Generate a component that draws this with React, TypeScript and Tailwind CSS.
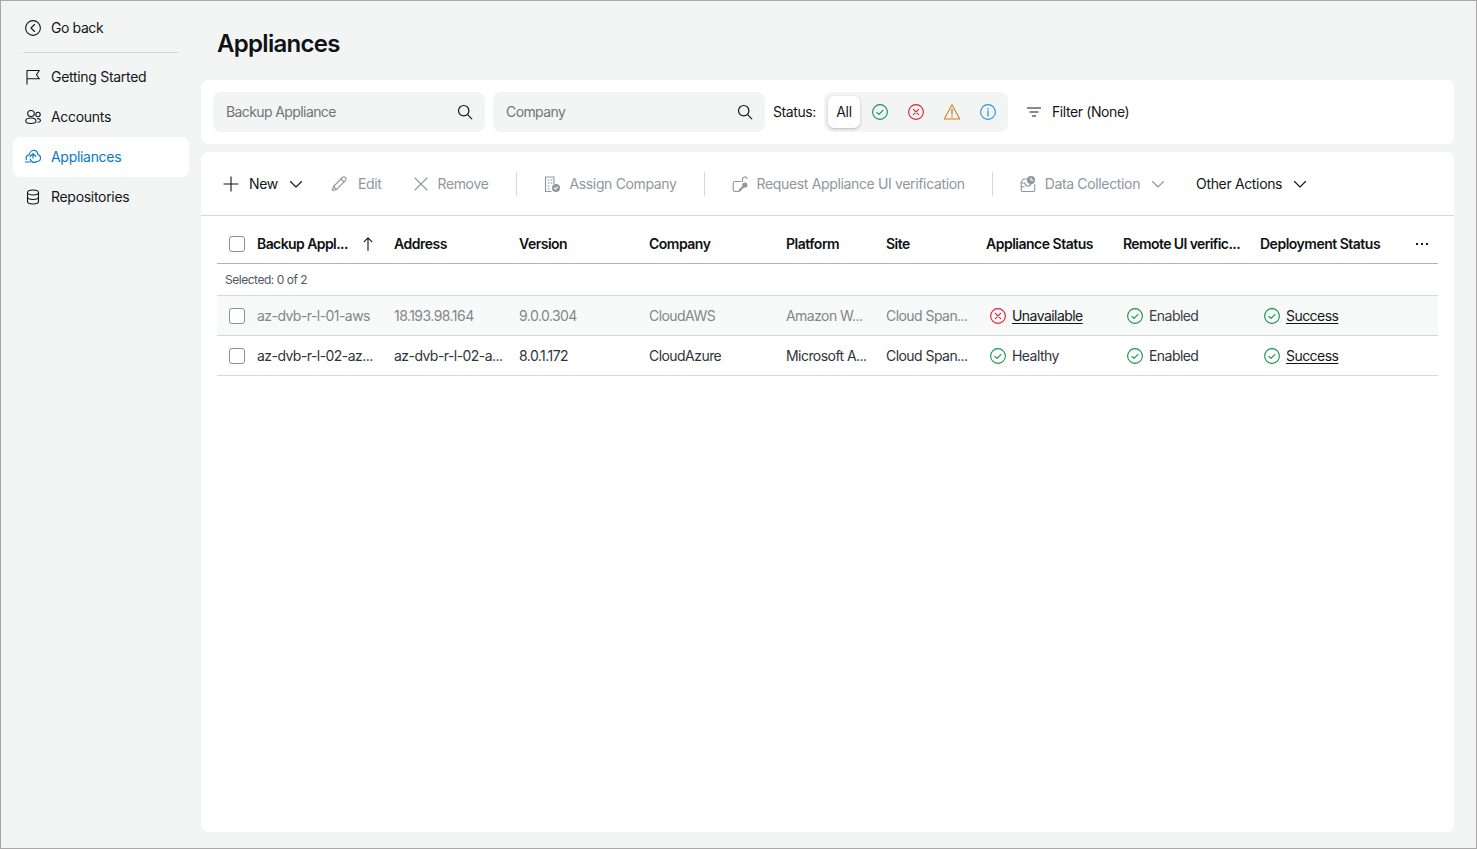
import React from "react";

type IP = { className?: string };
const S = ({ className, size = 16, children }: { className?: string; size?: number; children: React.ReactNode }) => (
  <svg width={size} height={size} viewBox={`0 0 ${size} ${size}`} fill="none" stroke="currentColor" strokeWidth="1.1" strokeLinecap="round" strokeLinejoin="round" className={`shrink-0 ${className ?? ""}`}>
    {children}
  </svg>
);

const Back = () => (
  <S><circle cx="8" cy="8" r="7.4" /><path d="M9.500 4.500 6 8l3.500 3.500" /></S>
);
const Flag = () => (
  <S>
    <path d="M2 15.500V1.500h12.300L11.500 5.800l2.800 4H2" strokeLinecap="butt" />
  </S>
);
const Users = () => (
  <S>
    <ellipse cx="6" cy="4.500" rx="3.300" ry="3" />
    <path d="M.7 12c0-2 2.200-3 5.300-3s5 1 5 3-2.200 2.500-5.200 2.500S.7 14 .7 12Z" />
    <circle cx="13" cy="5.500" r="2.200" />
    <path d="M12.500 9.600c1.900 0 3 .7 3 1.900s-1 1.800-2.600 1.800" />
  </S>
);
const CloudUp = () => (
  <S>
    <path d="M1.500 10.500C.3 8.300 1.800 5.800 4.200 5.800 4.800 3 7 1 9.300 1.300c2.200.3 3.400 2.200 3.500 4.200 1.700.4 2.700 1.800 2.700 3.400 0 2-1.500 3.600-3.500 3.600h-1" strokeWidth="1.200" />
    <path d="M.5 13h4.500" strokeWidth="1.200" />
    <path d="M5.300 7.300 8 4.800l2.700 2.500M8 5v4" strokeWidth="1.200" />
    <path d="M5.200 10c.6 2.700 2.700 3.900 5.600 3.200" strokeWidth="1.200" />
  </S>
);
const Db = () => (
  <S>
    <ellipse cx="8" cy="3.500" rx="5.500" ry="2.500" />
    <path d="M2.500 3.500v9c0 1.400 2.500 2.500 5.500 2.500s5.500-1.100 5.500-2.500v-9M2.500 8c0 1.400 2.500 2.500 5.500 2.500s5.500-1.100 5.500-2.500" />
  </S>
);
const Search = () => (
  <S><circle cx="6.700" cy="6.700" r="5.200" strokeWidth="1.200" /><path d="m10.600 10.600 4.200 4.200" strokeWidth="1.200" /></S>
);
const CheckC = ({ className }: IP) => (
  <S className={className ?? "text-[#16914f]"}><circle cx="8" cy="8" r="7.400" /><path d="m4.800 8.300 2.200 2 4-4" /></S>
);
const XC = () => (
  <S className="text-[#dc1f2e]"><circle cx="8" cy="8" r="7.400" /><path d="m5.400 5.400 5.200 5.200M10.600 5.400l-5.200 5.200" /></S>
);
const Warn = () => (
  <S className="text-[#cf7a1f]">
    <path d="M8 .8 15.700 15H.3Z" />
    <path d="M8 5.500v5" strokeWidth="1.300" />
    <path d="M8 12.300v.6" strokeWidth="1.300" />
  </S>
);
const Info = () => (
  <S className="text-[#2d93d8]"><circle cx="8" cy="8" r="7.400" /><path d="M8 7v5" strokeWidth="1.300" /><path d="M8 4.300v.6" strokeWidth="1.300" /></S>
);
const FilterI = () => (
  <S><path d="M1 4h14M3.500 8h9M6 12h4" strokeLinecap="butt" /></S>
);
const Plus = () => (
  <S><path d="M8 .500v15M.500 8h15" strokeLinecap="butt" /></S>
);
const Chev = ({ className }: IP) => (
  <S size={12} className={className}><path d="M.500 3.500 6 9l5.500-5.500" /></S>
);
const Pencil = () => (
  <S>
    <path d="M1.500 14.500 2.500 10.500 11.500 1.500a1.800 1.800 0 0 1 2.800 0 1.800 1.800 0 0 1 .2 2.800L5.500 13.500Z" />
    <path d="m10 3 3 3M2.500 10.500l3 3" />
  </S>
);
const X = () => (
  <S><path d="M2 2l12 12M14 2 2 14" /></S>
);
const Building = () => (
  <S>
    <path d="M10 7.500V1H1.500v14.500H7" />
    <path d="M4 4h1M7 4h1M4 7h1M7 7h1M4 10h1M4 13h1" />
    <circle cx="12" cy="12" r="4" fill="currentColor" stroke="none" />
    <path d="m10.300 12 1.200 1.200 2-2" stroke="#fff" />
  </S>
);
const LockKey = () => (
  <S>
    <path d="M9 5.500H3A1.800 1.800 0 0 0 1.200 7.300v6.400A1.800 1.800 0 0 0 3 15.500h3.500" />
    <path d="M10.500 5.500V3a2.300 2.300 0 0 1 4.500-.4" />
    <circle cx="12.800" cy="9" r="2.600" fill="currentColor" stroke="none" />
    <path d="m11.500 10.500-4 4" strokeWidth="2.200" />
  </S>
);
const DataC = () => (
  <S>
    <path d="M6.500 3H3.500L1.200 6v8a1.500 1.500 0 0 0 1.500 1.500h10.600a1.500 1.500 0 0 0 1.500-1.500V8.500" />
    <path d="M1.200 7h3.500c.5 2 1.500 3 3.300 3s2.800-1 3.300-3M1.200 10.800h3" />
    <circle cx="11" cy="4" r="4" fill="currentColor" stroke="none" />
    <path d="M11 2v2.300h2" stroke="#fff" />
  </S>
);
const ArrowUp = () => (
  <S size={14}><path d="M7 13.500V.8M3.200 4.600 7 .8l3.800 3.800" /></S>
);

const NavItem = ({ icon, label, active }: { icon: React.ReactNode; label: string; active?: boolean }) => (
  <div className={`flex h-10 items-center gap-[10px] rounded-lg pl-3 ${active ? "bg-white text-[#0a78c8]" : "text-[#14171a]"}`}>
    {icon}
    <span>{label}</span>
  </div>
);

const SearchBox = ({ label }: { label: string }) => (
  <div className="flex h-10 w-[272px] items-center justify-between rounded-lg bg-[#f3f5f5] pl-[13px] pr-3 text-[#6f7578]">
    <span className="tracking-[-0.6px]">{label}</span>
    <span className="text-[#14171a]"><Search /></span>
  </div>
);

const Tool = ({ icon, label, className, dark, gap }: { icon: React.ReactNode; label: string; className?: string; dark?: boolean; gap?: string }) => (
  <div className={`flex items-center ${gap ?? "gap-2"} ${dark ? "text-[#14171a]" : "text-[#8e979d]"} ${className ?? ""}`}>
    {icon}
    <span>{label}</span>
  </div>
);

const Sep = () => <div className="h-6 w-px bg-[#d5d8d9]" />;

const cols = "grid grid-cols-[40px_137px_125px_130px_137px_100px_100px_137px_137px_178px] items-center";

const Box = () => <div className="ml-3 h-4 w-4 rounded-[3px] border border-[#8a9094] bg-white" />;

const Status = ({ icon, label, link }: { icon: React.ReactNode; label: string; link?: boolean }) => (
  <div className="flex items-center gap-[6px] pl-1">
    {icon}
    <span className={link ? "text-[#14171a] underline underline-offset-2" : ""}>{label}</span>
  </div>
);

const cellTrunc = "whitespace-nowrap";

export default function App() {
  return (
    <div className="flex h-[849px] w-[1477px] overflow-hidden border border-[#a8a8a8] bg-[#f3f5f5] text-[14px] leading-5 tracking-[-0.3px] text-[#14171a] [font-family:Inter,sans-serif]">
      <aside className="flex w-[200px] shrink-0 flex-col pl-3 pr-3 pt-[7px]">
        <div className="flex h-10 items-center gap-[10px] pl-3">
          <Back />
          <span className="tracking-[-0.4px]">Go back</span>
        </div>
        <div className="mb-1 ml-[10px] mr-[10px] mt-1 h-px bg-[#d5d8d9]" />
        <NavItem icon={<Flag />} label="Getting Started" />
        <NavItem icon={<Users />} label="Accounts" />
        <NavItem icon={<CloudUp />} label="Appliances" active />
        <NavItem icon={<Db />} label="Repositories" />
      </aside>

      <main className="flex min-w-0 flex-1 flex-col pb-4 pr-[22px]">
        <h1 className="flex h-[79px] items-center pl-4 pt-[7px] text-[24px] font-semibold tracking-[-0.7px] text-[#0f1214]">Appliances</h1>

        <section className="flex h-16 items-center gap-2 rounded-lg bg-white pl-3">
          <SearchBox label="Backup Appliance" />
          <SearchBox label="Company" />
          <span className="tracking-[-0.4px]">Status:</span>
          <div className="flex h-10 items-center rounded-lg bg-[#f3f5f5] pl-1 pr-[2px]">
            <div className="mr-[2px] flex h-8 w-8 items-center justify-center rounded-md bg-white shadow-[0_1px_3px_rgba(0,0,0,0.25)]">All</div>
            <div className="flex h-8 w-9 items-center justify-center"><CheckC /></div>
            <div className="flex h-8 w-9 items-center justify-center"><XC /></div>
            <div className="flex h-8 w-9 items-center justify-center"><Warn /></div>
            <div className="flex h-8 w-9 items-center justify-center"><Info /></div>
          </div>
          <div className="ml-[10px] flex items-center gap-[10px] tracking-[-0.4px]">
            <FilterI />
            <span>Filter (None)</span>
          </div>
        </section>

        <section className="mt-2 flex flex-1 flex-col rounded-lg bg-white">
          <div className="flex h-16 shrink-0 items-center border-b border-[#d5d8d9] pl-[22px] tracking-[-0.35px]">
            <Tool icon={<Plus />} label="New" dark gap="gap-[10px]" />
            <span className="ml-3 text-[#14171a]"><Chev /></span>
            <Tool icon={<Pencil />} label="Edit" className="ml-[29px]" gap="gap-[11px]" />
            <Tool icon={<X />} label="Remove" className="ml-[32px]" gap="gap-2" />
            <div className="ml-[28px]"><Sep /></div>
            <Tool icon={<Building />} label="Assign Company" className="ml-[27px]" gap="gap-[9px]" />
            <div className="ml-[27px]"><Sep /></div>
            <Tool icon={<LockKey />} label="Request Appliance UI verification" className="ml-[27px]" gap="gap-[9px]" />
            <div className="ml-[27px]"><Sep /></div>
            <Tool icon={<DataC />} label="Data Collection" className="ml-[27px]" gap="gap-[9px]" />
            <span className="ml-3 text-[#8e979d]"><Chev /></span>
            <Tool icon={null} label="Other Actions" dark className="ml-[32px]" />
            <span className="ml-3 text-[#14171a]"><Chev /></span>
          </div>

          <div className="mx-4 flex flex-col">
            <div className={`${cols} h-[48px] border-b border-[#aeb3b5] pt-[8px] font-semibold tracking-[-0.5px] text-[#0f1214]`}>
              <Box />
              <div className="flex items-center justify-between pr-[19px]"><span className="tracking-[-0.58px]">Backup Appl...</span><ArrowUp /></div>
              <div>Address</div>
              <div>Version</div>
              <div>Company</div>
              <div>Platform</div>
              <div>Site</div>
              <div>Appliance Status</div>
              <div className="tracking-[-0.6px]">Remote UI verific...</div>
              <div className="flex items-center justify-between pr-[10px]"><span>Deployment Status</span><span className="flex gap-[3px]"><i className="h-[2px] w-[2px] bg-[#14171a]" /><i className="h-[2px] w-[2px] bg-[#14171a]" /><i className="h-[2px] w-[2px] bg-[#14171a]" /></span></div>
            </div>
            <div className="flex h-8 items-center border-b border-[#d5d8d9] pl-2 text-[12px] tracking-[-0.47px] text-[#4f5a60]">Selected: 0 of 2</div>
            <div className={`${cols} h-10 border-b border-[#d5d8d9] bg-[#f8f9f9] tracking-[-0.55px] text-[#80878b]`}>
              <Box />
              <div className={cellTrunc}>az-dvb-r-l-01-aws</div>
              <div className={cellTrunc}>18.193.98.164</div>
              <div className={cellTrunc}>9.0.0.304</div>
              <div className={cellTrunc}>CloudAWS</div>
              <div className={cellTrunc}>Amazon W...</div>
              <div className={cellTrunc}>Cloud Span...</div>
              <Status icon={<XC />} label="Unavailable" link />
              <div className="text-[#3a4044]"><Status icon={<CheckC />} label="Enabled" /></div>
              <Status icon={<CheckC />} label="Success" link />
            </div>
            <div className={`${cols} h-10 border-b border-[#d5d8d9] tracking-[-0.55px] text-[#2e3438]`}>
              <Box />
              <div className={cellTrunc}>az-dvb-r-l-02-az...</div>
              <div className={cellTrunc}>az-dvb-r-l-02-a...</div>
              <div className={cellTrunc}>8.0.1.172</div>
              <div className={cellTrunc}>CloudAzure</div>
              <div className={cellTrunc}>Microsoft A...</div>
              <div className={cellTrunc}>Cloud Span...</div>
              <Status icon={<CheckC />} label="Healthy" />
              <Status icon={<CheckC />} label="Enabled" />
              <Status icon={<CheckC />} label="Success" link />
            </div>
          </div>
        </section>
      </main>
    </div>
  );
}
